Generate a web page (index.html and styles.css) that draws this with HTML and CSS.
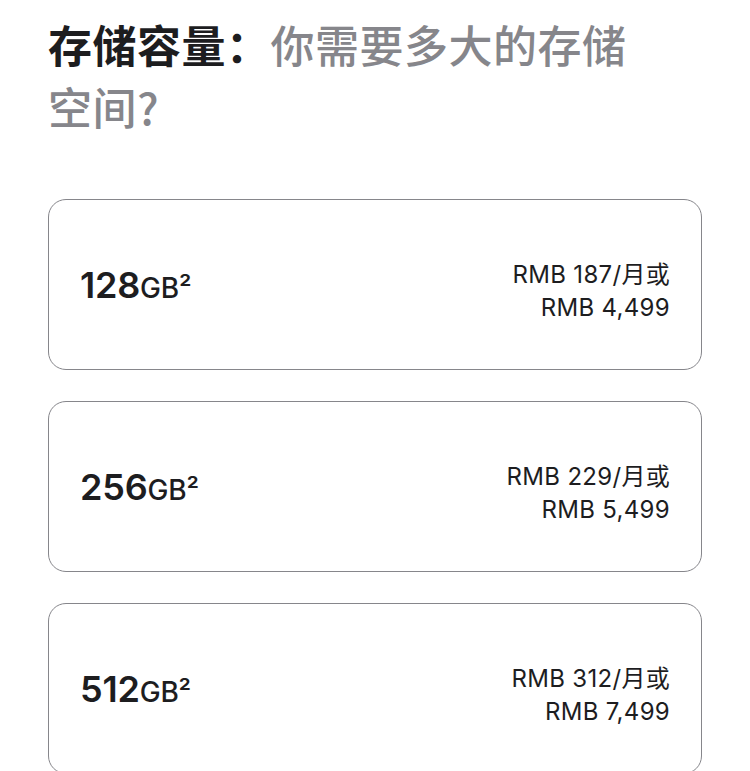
FILE: index.html
```html
<!DOCTYPE html>
<html lang="zh-CN">
<head>
<meta charset="utf-8">
<title>存储容量</title>
<link rel="stylesheet" href="styles.css">
</head>
<body>
<main class="page">
  <h2 class="title"><span class="title-strong">存储容量：</span><span class="title-muted">你需要多大的存储</span><br><span class="title-muted">空间?</span></h2>
  <ul class="options">
    <li class="option">
      <span class="cap">128<span class="unit">GB²</span></span>
      <span class="price">RMB 187/月或<br>RMB 4,499</span>
    </li>
    <li class="option">
      <span class="cap">256<span class="unit">GB²</span></span>
      <span class="price">RMB 229/月或<br>RMB 5,499</span>
    </li>
    <li class="option">
      <span class="cap">512<span class="unit">GB²</span></span>
      <span class="price">RMB 312/月或<br>RMB 7,499</span>
    </li>
  </ul>
</main>
</body>
</html>
```
FILE: styles.css
```css
html, body {
  margin: 0;
  padding: 0;
  background: #ffffff;
}
body {
  font-family: Inter, "Noto Sans CJK SC", sans-serif;
  color: #1d1d1f;
  overflow: hidden;
}
.page {
  padding: 13px 48px 0 48px;
}
.title {
  margin: 0;
  font-family: "Noto Sans CJK SC", sans-serif;
  font-size: 44px;
  line-height: 62px;
  font-weight: 700;
  letter-spacing: 0.5px;
  width: 620px;
}
.title-strong {
  color: #1d1d1f;
  font-weight: 700;
}
.title-muted {
  color: #86868b;
  font-weight: 500;
}
.options {
  list-style: none;
  margin: 62px 0 0 0;
  padding: 0;
  display: flex;
  flex-direction: column;
  gap: 31px;
}
.option {
  box-sizing: border-box;
  height: 171px;
  border: 1.5px solid #86868b;
  border-radius: 18px;
  padding: 0 31px 0 31px;
  display: flex;
  align-items: center;
  justify-content: space-between;
}
.cap {
  font-size: 36px;
  font-weight: 600;
  letter-spacing: -0.2px;
}
.unit {
  font-size: 28px;
  font-weight: 500;
}
.price {
  font-size: 24px;
  line-height: 33px;
  text-align: right;
  padding-top: 12px;
  font-weight: 400;
  letter-spacing: 0.3px;
}
```
